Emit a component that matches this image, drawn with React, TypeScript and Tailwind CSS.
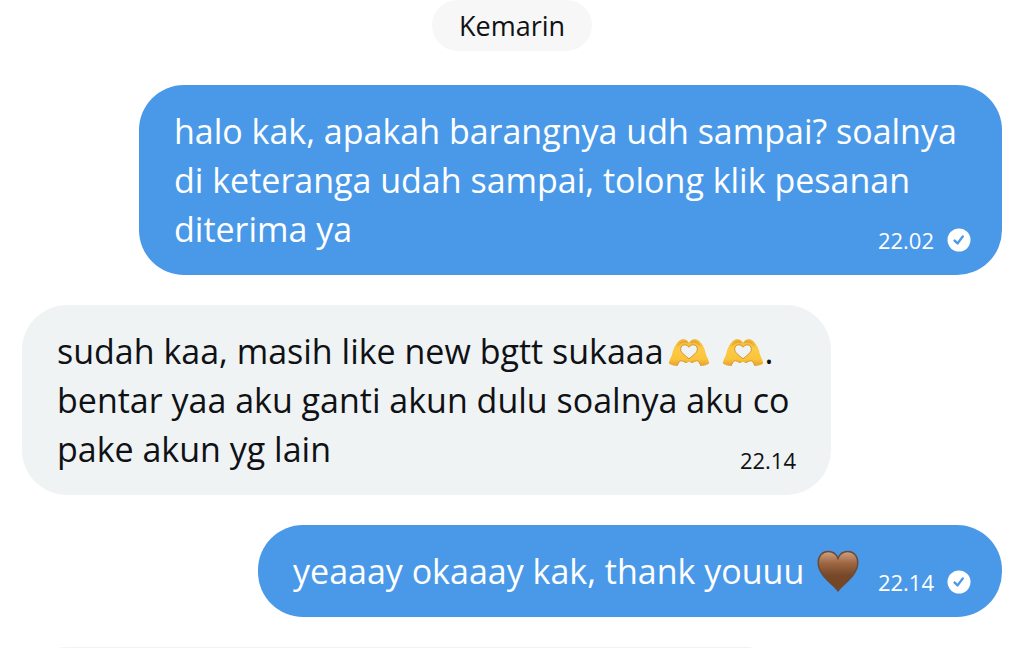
import { useId } from "react";
import clsx from "clsx";

interface Message {
  id: number;
  mine: boolean;
  lines: string[];
  time: string;
  width: string;
}

const messages: Message[] = [
  {
    id: 1,
    mine: true,
    lines: [
      "halo kak, apakah barangnya udh sampai? soalnya",
      "di keteranga udah sampai, tolong klik pesanan",
      "diterima ya",
    ],
    time: "22.02",
    width: "w-[863px]",
  },
  {
    id: 2,
    mine: false,
    lines: [
      "sudah kaa, masih like new bgtt sukaaa🫶 🫶.",
      "bentar yaa aku ganti akun dulu soalnya aku co",
      "pake akun yg lain",
    ],
    time: "22.14",
    width: "w-[809px]",
  },
  {
    id: 3,
    mine: true,
    lines: ["yeaaay okaaay kak, thank youuu 🤎"],
    time: "22.14",
    width: "w-[744px]",
  },
];

function HeartHands() {
  const id = useId();
  return (
    <svg viewBox="0 0 42 32" role="img" aria-label="heart hands" className="ml-1 inline-block h-8 w-[42px] align-[-5px]">
      <defs>
        <linearGradient id={id} x1="0" y1="0" x2="0" y2="1">
          <stop offset="0" stopColor="#efb02f" />
          <stop offset="0.35" stopColor="#fccb45" />
          <stop offset="0.75" stopColor="#fbc43a" />
          <stop offset="1" stopColor="#e5a02c" />
        </linearGradient>
      </defs>
      {[false, true].map((flip) => (
        <g key={String(flip)} transform={flip ? "translate(42 0) scale(-1 1)" : undefined}>
          <path
            d="M.8 26.500C1.200 23.500 2.600 20.800 3.800 18.300 4.800 14.500 5.300 11.500 7.500 8.200 9.500 5.200 11.500 2.800 14.500 2.300 17.500 2 20 3.600 21 5.800V10.200C19.500 8.400 17.500 7.400 15.500 8 13.200 8.800 12.300 10.800 12.800 13.200 13.500 16.500 18 19 21 21.800V24.600C20 26 18.200 26 16.500 25.200 15 24.500 13.800 23.600 12.500 23.800 10.800 24.600 10 26.700 9.200 28.800 6.500 28.900 3.200 28.100.8 26.500Z"
            fill={`url(#${id})`}
          />
          <path
            d="M21 10.200C19.500 8.400 17.500 7.400 15.500 8 13.200 8.800 12.300 10.800 12.800 13.200 13.500 16.500 18 19 21 21.800M12.500 23.800C10.800 24.600 10 26.700 9.200 28.800"
            fill="none"
            stroke="#d18a20"
            strokeWidth="0.9"
          />
          <path
            d="M10.500 8.200C12.500 5.200 15.500 3.900 19 5.200M12.500 23.800C14.500 23.200 15.800 25.200 18.500 25.400"
            fill="none"
            stroke="#d9962a"
            strokeWidth="0.9"
            strokeLinecap="round"
          />
        </g>
      ))}
    </svg>
  );
}

function BrownHeart() {
  const id = useId();
  return (
    <svg viewBox="0 0 42 42" role="img" aria-label="brown heart" className="ml-1 inline-block size-[42px] align-[-8px]">
      <defs>
        <linearGradient id={id} x1="0" y1="0" x2="0" y2="1">
          <stop offset="0" stopColor="#d3a283" />
          <stop offset="0.3" stopColor="#9c6640" />
          <stop offset="0.6" stopColor="#77482a" />
          <stop offset="1" stopColor="#75451f" />
        </linearGradient>
      </defs>
      <path
        d="M21 41C17 34.500 1.200 26 1.200 12.500 1.200 6 5.500 1.500 11.200 1.500 15.800 1.500 19.500 4.200 21 8.500 22.500 4.200 26.200 1.500 30.800 1.500 36.500 1.500 40.800 6 40.800 12.500 40.800 26 25 34.500 21 41Z"
        fill={`url(#${id})`}
        stroke="#6b4a38"
        strokeWidth="1.4"
      />
    </svg>
  );
}

function SentBadge() {
  return (
    <svg viewBox="0 0 24 24" role="img" aria-label="sent" className="size-6">
      <circle cx="12" cy="12" r="11.500" fill="#fff" />
      <path
        d="m7.600 12.600 3 2.800 5.200-7"
        fill="none"
        stroke="#4a99e9"
        strokeWidth="2.400"
        strokeLinecap="round"
        strokeLinejoin="round"
      />
    </svg>
  );
}

function Line({ text }: { text: string }) {
  return (
    <span className="block">
      {text.split(/(🫶|🤎)/u).map((part, i) => {
        if (part === "🫶") return <HeartHands key={i} />;
        if (part === "🤎") return <BrownHeart key={i} />;
        return part;
      })}
    </span>
  );
}

function Bubble({ message }: { message: Message }) {
  return (
    <li
      className={clsx(
        "grid max-w-full rounded-[45px] pt-[22px] pb-[21px] pl-[35px]",
        message.width,
        message.mine ? "self-end bg-[#4a99e9] pr-[31px] text-white" : "self-start bg-[#eff3f4] pr-[35px] text-[#0f1114]"
      )}
    >
      <p className="col-start-1 row-start-1 text-[34px] leading-[49px] whitespace-nowrap">
        {message.lines.map((line) => (
          <Line key={line} text={line} />
        ))}
      </p>
      <div className="col-start-1 row-start-1 flex items-center gap-[13px] self-end justify-self-end text-[22px] leading-7">
        <time>{message.time}</time>
        {message.mine && <SentBadge />}
      </div>
    </li>
  );
}

export default function App() {
  return (
    <main className="flex h-screen flex-col overflow-hidden bg-white font-['Open_Sans',sans-serif]">
      <h2 className="shrink-0 self-center rounded-full bg-[#f7f7f7] px-[27px] text-[27px] leading-[51px] text-[#0f1114]">
        Kemarin
      </h2>

      <ul className="mt-[34px] flex flex-col gap-[30px] pr-[22px] pl-[22px]">
        {messages.map((message) => (
          <Bubble key={message.id} message={message} />
        ))}
        {/* next incoming bubble, cut off by the bottom edge */}
        <li className="h-[91px] w-[768px] max-w-full rounded-[45px] bg-[#eff3f4]" />
      </ul>
    </main>
  );
}
